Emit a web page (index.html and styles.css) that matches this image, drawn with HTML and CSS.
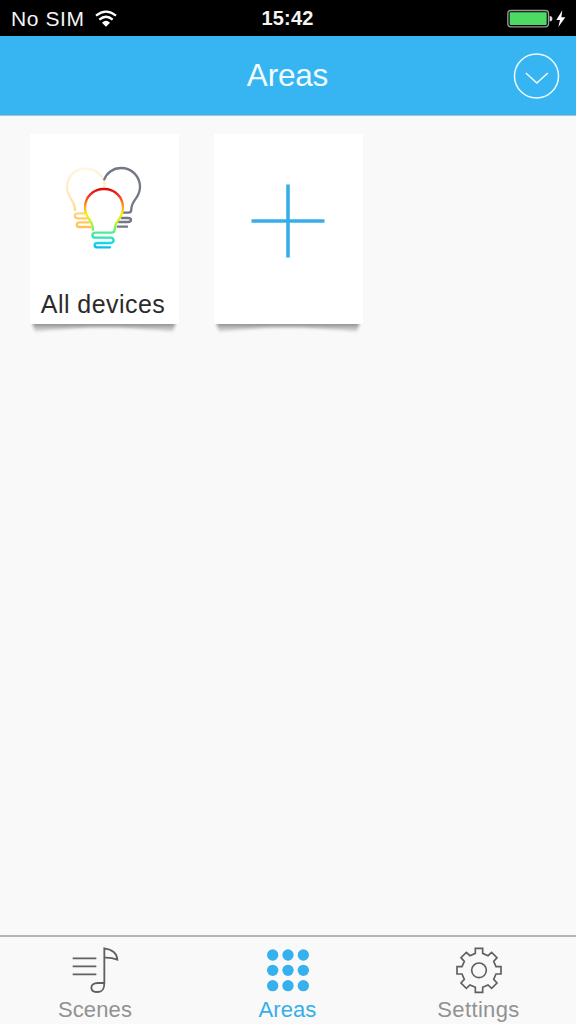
FILE: index.html
```html
<!DOCTYPE html>
<html lang="en">
<head>
<meta charset="utf-8">
<title>Areas</title>
<link rel="stylesheet" href="styles.css">
</head>
<body>
<div class="app">
  <div class="status">
    <div class="carrier"><span>No SIM</span>
      <svg class="wifi" viewBox="0 0 66 51"><g fill="none" stroke="#fff" stroke-width="7"><path d="M3 17Q33-7 63 17"/><path d="M13 29Q33 11 53 29"/></g><path d="M21 38Q33 27 45 38L33 50Z" fill="#fff"/></svg>
    </div>
    <time class="clock">15:42</time>
    <svg class="battery" viewBox="0 0 177 60"><rect x="2.5" y="4.500" width="122" height="49" rx="9" fill="none" stroke="#999" stroke-width="4"/><rect x="8" y="10" width="111" height="38" rx="3" fill="#4cd964"/><path d="M128 21Q136 21 136 29T128 37Z" fill="#ddd"/><path d="M166 4L148 33H159L154 54L175 25H163Z" fill="#fff"/></svg>
  </div>
  <header class="nav">
    <h1>Areas</h1>
    <svg class="more" viewBox="0 0 138 138"><g fill="none" stroke="#effbff" stroke-width="4.500"><circle cx="67.500" cy="69" r="66"/><path d="M35.500 60L68.500 90L101.500 60"/></g></svg>
  </header>
  <main class="areas">
    <div class="card">
      <svg class="bulbs" viewBox="0 0 330 330">
        <defs><linearGradient id="warm" x1="0" y1="50" x2="0" y2="235" gradientUnits="userSpaceOnUse"><stop offset="0" stop-color="#fff5e2"/><stop offset=".5" stop-color="#ffe7b8"/><stop offset="1" stop-color="#ffc04d"/></linearGradient>
        <linearGradient id="rainbow" x1="0" y1="114" x2="0" y2="294" gradientUnits="userSpaceOnUse"><stop offset="0" stop-color="#d90b0b"/><stop offset=".12" stop-color="#f42c13"/><stop offset=".28" stop-color="#ff9322"/><stop offset=".44" stop-color="#fff00a"/><stop offset=".62" stop-color="#a0f544"/><stop offset=".77" stop-color="#42eaa0"/><stop offset=".92" stop-color="#10d9e8"/><stop offset="1" stop-color="#0eb7ef"/></linearGradient></defs>
        <g fill="none" stroke-width="7" stroke-linecap="round" stroke-linejoin="round">
          <path stroke="url(#warm)" d="M75 180C75 151 51 143 51 112C51 78 76 56 107 56C134 56 157 73 163 98V112M104 190H84C71 190 71 205 84 205H112M116 217H90C77 217 77 231 90 231H122"/>
          <path stroke="#737787" d="M163 88C170 68 190 54 213 54C246 54 270 80 270 111C270 145 244 149 244 178Q244 188 235 188H218M214 204H234C246 204 246 216 234 216H206M203 230H231"/>
          <path stroke="url(#rainbow)" d="M129 239C129 209 105 205 105 174C105 141 129 117 162 117C195 117 219 141 219 174C219 207 194 211 194 238Q194 248 184 248H137C124 248 124 263 137 263H181C194 263 194 279 181 279H143C131 279 131 292 143 292H180"/>
        </g>
      </svg>
      <span class="label">All devices</span>
      <svg class="shadow" viewBox="0 0 149 14"><defs><linearGradient id="fade" gradientUnits="userSpaceOnUse" x1="0" y1="0" x2="0" y2="9"><stop stop-color="#777" stop-opacity=".8"/><stop offset="1" stop-color="#999" stop-opacity=".12"/></linearGradient><filter id="soft" filterUnits="userSpaceOnUse" x="-5" y="-12" width="159" height="30"><feGaussianBlur stdDeviation="1.5"/></filter></defs><path d="M1-6H147L143 8Q74-1 5 8Z" fill="url(#fade)" filter="url(#soft)"/></svg>
    </div>
    <div class="card">
      <svg class="plus" viewBox="0 0 74 74"><path d="M37 .5V73.500M.5 37H73.500" stroke="#36aee8" stroke-width="3.600"/></svg>
      <svg class="shadow" viewBox="0 0 149 14"><path d="M1-6H147L143 8Q74-1 5 8Z" fill="url(#fade)" filter="url(#soft)"/></svg>
    </div>
  </main>
  <nav class="tabs">
    <div class="tab scenes">
      <svg viewBox="-3 0 144 144"><g fill="none" stroke="#606060" stroke-width="5.500"><path d="M2 37H73M2 61H73M2 85H73"/><path d="M97 111V7C116 10 135 19 136 41Q118 34 97 35M97 111H77C66 111 58 117 58 125C58 134 66 138 77 138C91 138 97 131 97 111Z"/></g></svg>
      <span>Scenes</span>
    </div>
    <div class="tab active">
      <svg viewBox="0 -1 144 144"><g fill="#37b0ee"><circle cx="26" cy="26" r="17"/><circle cx="72" cy="26" r="17"/><circle cx="118" cy="26" r="17"/><circle cx="26" cy="72" r="17"/><circle cx="72" cy="72" r="17"/><circle cx="118" cy="72" r="17"/><circle cx="26" cy="118" r="17"/><circle cx="72" cy="118" r="17"/><circle cx="118" cy="118" r="17"/></g></svg>
      <span>Areas</span>
    </div>
    <div class="tab settings">
      <svg viewBox="-72 -73 144 144"><g fill="none" stroke="#606060" stroke-width="5"><circle r="22"/><path d="M-11-66H11V-51L27-44L38-54L54-38L44-27L51-11H66V11H51L44 27L54 38L38 54L27 44L11 51V66H-11V51L-27 44L-38 54L-54 38L-44 27L-51 11H-66V-11H-51L-44-27L-54-38L-38-54L-27-44L-11-51Z"/></g></svg>
      <span>Settings</span>
    </div>
  </nav>
</div>
</body>
</html>
```
FILE: styles.css
```css
* { box-sizing: border-box; }
body { margin: 0; font-family: "Liberation Sans", Arial, sans-serif; }
svg { display: block; }
.app { height: 1024px; display: flex; flex-direction: column; background: #f9f9f9; overflow: hidden; }
.status { height: 36px; flex: none; display: grid; grid-template-columns: 1fr auto 1fr; align-items: center; padding: 0 10px 0 11px; background: #000; color: #f4f4f4; }
.carrier { display: flex; align-items: center; gap: 10px; font-size: 21px; line-height: 36px; letter-spacing: .6px; }
.carrier span { padding-top: 1px; }
.wifi { width: 22px; height: 17px; }
.clock { font-size: 20px; font-weight: bold; letter-spacing: .2px; line-height: 37px; margin-left: -2px; }
.battery { width: 59px; height: 20px; justify-self: end; }
.nav { height: 80px; flex: none; display: grid; grid-template-columns: 1fr auto 1fr; align-items: center; padding: 0 16px 0 16px; background: #36b5f2; border-bottom: 1px solid #a3c5d5; }
.nav h1 { grid-column: 2; margin: 0 1px 0 0; color: #f1fcff; font-size: 31.500px; font-weight: normal; line-height: 79px; letter-spacing: -.2px; }
.more { width: 46px; height: 46px; justify-self: end; overflow: visible; }
.areas { flex: 1; display: flex; align-items: flex-start; gap: 35px; padding: 18px 29.500px; }
.card { position: relative; width: 149px; height: 190px; flex: none; display: flex; flex-direction: column; align-items: center; background: #fff; }
.bulbs { width: 110px; height: 110px; margin-top: 16px; align-self: flex-start; margin-left: 20.500px; }
.label { margin: 29px 2px 0 0; font-size: 25px; line-height: 30px; letter-spacing: .45px; color: #2b2b2b; white-space: nowrap; }
.plus { width: 74px; height: 74px; margin-top: 50px; }
.shadow { position: absolute; left: 0; top: 190px; width: 149px; height: 14px; }
.tabs { height: 89px; flex: none; display: grid; grid-template-columns: repeat(3, 1fr); padding: 0; border-top: 2px solid #b5b5b5; background: #f9f9f9; }
.tab { display: flex; flex-direction: column; align-items: center; padding-top: 9px; color: #929292; font-size: 22px; letter-spacing: .1px; }
.tab svg { width: 48px; height: 48px; }
.tab span { line-height: 30px; margin-top: 1px; }
.tab.scenes { padding-right: 2px; }
.tab.active { color: #37aeea; }
.tab.active span { margin-right: 1px; }
.tab.settings { letter-spacing: .35px; padding-right: 3px; }
```
